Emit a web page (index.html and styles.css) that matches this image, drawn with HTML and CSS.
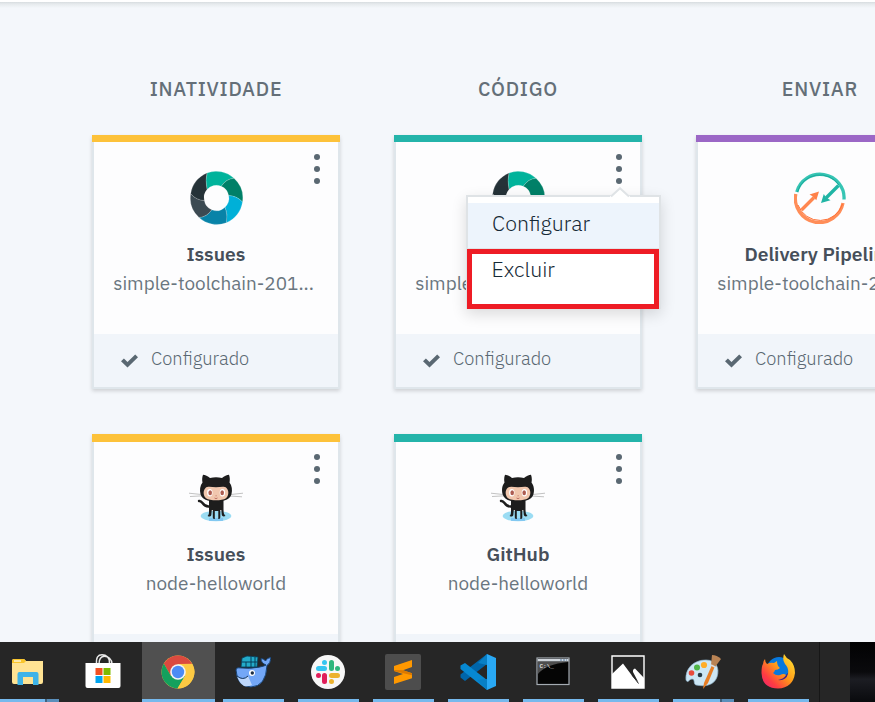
FILE: index.html
```html
<!DOCTYPE html>
<html lang="pt-BR">
<head>
<meta charset="utf-8">
<title>Toolchain</title>
<link rel="stylesheet" href="styles.css">
</head>
<body>
<svg class="defs" width="0" height="0" aria-hidden="true">
  <symbol id="ring" viewBox="0 0 53 54">
    <g stroke="#fff" stroke-opacity=".35" stroke-width=".5">
      <path fill="#00b39b" d="M17 1.9A26.5 26.5 0 0 1 44 7.3Q36 8 31.3 15.3A12.5 12.5 0 0 0 17 18.5Q15 9 17 1.9Z"/>
      <path fill="#008068" d="M44 7.3A26.5 26.5 0 0 1 52.5 31Q47 25 38.7 24.6A12.5 12.5 0 0 0 31.3 15.3Q36 8 44 7.3Z"/>
      <path fill="#00b0d8" d="M52.5 31A26.5 26.5 0 0 1 36.3 51.8Q38 43 35 36.2A12.5 12.5 0 0 0 38.7 24.6Q47 25 52.5 31Z"/>
      <path fill="#0883a8" d="M36.3 51.8A26.5 26.5 0 0 1 9 46.5Q17 46 21.7 38.8A12.5 12.5 0 0 0 35 36.2Q38 43 36.3 51.8Z"/>
      <path fill="#3c4a52" d="M9 46.5A26.5 26.5 0 0 1 .7 22.7Q6 29 14.3 29.5A12.5 12.5 0 0 0 21.7 38.8Q17 46 9 46.5Z"/>
      <path fill="#253238" d="M.7 22.7A26.5 26.5 0 0 1 17 1.9Q15 9 17 18.5A12.5 12.5 0 0 0 14.3 29.5Q6 29 .7 22.7Z"/>
    </g>
  </symbol>
  <symbol id="octocat" viewBox="0 0 54 48">
    <ellipse cx="27" cy="42" rx="15.3" ry="5.2" fill="#9bdcf3"/>
    <path d="M20 44h14v3H20z" fill="#77bff0" opacity=".7"/>
    <path d="M0 19.2l14 1.5M1 22.5l13-.7M40 20.7l14-1.5M40 22l13 .8" stroke="#bbb" stroke-width=".9" fill="none"/>
    <path d="M10 27c4-1 3 6 10 5.500" stroke="#1d1d1d" stroke-width="2.400" fill="none" stroke-linecap="round"/>
    <path d="M20 26h14.500v8c0 5 .3 6 2 8-2 1-3.300.3-3.700-1l-.5-5h-1v7c0 1.600-.6 2-2 2v-8h-3.500v8c-1.400 0-2-.4-2-2v-7h-1l-.5 5c-.4 1.500-1.700 2-3.700 1 1.700-2 1.400-3 1.400-8z" fill="#1d1d1d"/>
    <path d="M14 .8c2 0 5 1.600 7 3.200 4-1 8-1 12 0 2-1.600 5-3.200 7-3.200 1 2.600 1 5.500.5 7.700 2.500 3 3 7.500 2 11.500-1.500 5.500-7 7.500-15.500 7.500S13 25.500 11.500 20c-1-4-.5-8.500 2-11.500C13 6.300 13 3.400 14 .8z" fill="#1d1d1d"/>
    <path d="M16.500 14c2-2 6-.8 10.500-.8s8.500-1.200 10.500.8c3 3.200 2 8-.5 10.200-2 1.600-6 2-10 2s-8-.4-10-2C14.500 22 13.500 17.200 16.500 14z" fill="#f1c7ae"/>
    <ellipse cx="20.800" cy="18.800" rx="2.700" ry="3.700" fill="#fff"/><ellipse cx="33.400" cy="18.800" rx="2.700" ry="3.700" fill="#fff"/>
    <ellipse cx="21.200" cy="18.800" rx="1.800" ry="2.500" fill="#ad5c51"/><ellipse cx="33.200" cy="18.800" rx="1.800" ry="2.500" fill="#ad5c51"/>
    <path d="M25.500 24q1.500 1.300 3 0M26.600 21.800h1" stroke="#ad5c51" stroke-width=".8" fill="none"/>
  </symbol>
  <symbol id="pipeline" viewBox="0 0 52 52">
    <g fill="none" stroke-width="3.300">
      <path d="M2.800 20A24 23.500 0 0 1 50 27.500" stroke="#36c5b4"/>
      <path d="M3.500 20A23 22.500 0 0 1 45 13" stroke="#1aa99a" stroke-width="1"/>
      <path d="M1.800 22A24 24 0 0 0 49 31" stroke="#ff8d58"/>
      <path d="M4 33A23.500 23.500 0 0 0 48.500 32" stroke="#ff6f32" stroke-width="1"/>
      <path d="M7.500 38L20 25.500" stroke="#ff8750"/>
      <path d="M44.500 13.500L32 26" stroke="#20b5a5"/>
    </g>
    <path d="M25 19.500l-9.500 3 3 1.800 3.800 4z" fill="#ff8149"/>
    <path d="M27 31l2.800-9 2 3.300 4.700 3z" fill="#20b5a5"/>
  </symbol>
  <symbol id="kebab" viewBox="0 0 6 30"><g fill="#5a6872"><circle cx="3" cy="3" r="3"/><circle cx="3" cy="15" r="3"/><circle cx="3" cy="27" r="3"/></g></symbol>
  <symbol id="check" viewBox="0 0 17 14"><path d="M0 7.300L2.900 4.400 6.500 7.900 14.200.4 17 3.200 6.500 13.600z" fill="#5a6872"/></symbol>
</svg>

<main class="board">
  <section class="column">
    <h2 class="heading">INATIVIDADE</h2>
    <article class="card yellow">
      <div class="body">
        <svg class="kebab"><use href="#kebab"/></svg>
        <svg class="logo"><use href="#ring"/></svg>
        <h3 class="name">Issues</h3>
        <p class="desc long">simple-toolchain-201...</p>
      </div>
      <footer class="status"><svg class="check"><use href="#check"/></svg><span>Configurado</span></footer>
    </article>
    <article class="card yellow">
      <div class="body">
        <svg class="kebab"><use href="#kebab"/></svg>
        <svg class="logo cat"><use href="#octocat"/></svg>
        <h3 class="name">Issues</h3>
        <p class="desc">node-helloworld</p>
      </div>
      <footer class="status"></footer>
    </article>
  </section>

  <section class="column">
    <h2 class="heading">CÓDIGO</h2>
    <article class="card teal">
      <div class="body">
        <svg class="kebab"><use href="#kebab"/></svg>
        <svg class="logo"><use href="#ring"/></svg>
        <h3 class="name">&nbsp;</h3>
        <p class="desc long">simple-toolchain-201...</p>
      </div>
      <footer class="status"><svg class="check"><use href="#check"/></svg><span>Configurado</span></footer>
      <div class="menu">
        <svg class="caret" viewBox="0 0 20 11"><path d="M0 9.500L10 0 20 9.500V11H0z" fill="#fff"/><path d="M1 9.500L10 1.200 19 9.500" fill="none" stroke="#dfe3e6" stroke-width="2"/></svg>
        <div class="item active">Configurar</div>
        <div class="item marked">Excluir</div>
      </div>
    </article>
    <article class="card teal">
      <div class="body">
        <svg class="kebab"><use href="#kebab"/></svg>
        <svg class="logo cat"><use href="#octocat"/></svg>
        <h3 class="name">GitHub</h3>
        <p class="desc">node-helloworld</p>
      </div>
      <footer class="status"></footer>
    </article>
  </section>

  <section class="column">
    <h2 class="heading">ENVIAR</h2>
    <article class="card purple">
      <div class="body">
        <svg class="logo pipe"><use href="#pipeline"/></svg>
        <h3 class="name">Delivery Pipeline</h3>
        <p class="desc long">simple-toolchain-201...</p>
      </div>
      <footer class="status"><svg class="check"><use href="#check"/></svg><span>Configurado</span></footer>
    </article>
  </section>
</main>

<nav class="taskbar">
  <div class="task split">
    <svg viewBox="0 0 36 36"><path d="M2 7q0-2 2-2h10l2 2h17v21q0 2-2 2H4q-2 0-2-2z" fill="#ffe393"/><path d="M2 9V7q0-2 2-2h10l2 2-2 2z" fill="#f8c52c"/><path d="M4 7h7" stroke="#fff" stroke-width="1.200"/><path d="M7.500 31V20q0-2 2-2h17q2 0 2 2v11h-5.500v-8H13v8z" fill="#3eb3e8"/></svg>
  </div>
  <div class="task idle">
    <svg viewBox="0 0 36 36"><path d="M11.500 10C11 3 13 .8 17 .8s8 2.200 7.500 9.200M14 10c0-5 2-7.800 5.500-7.800S27 5 27 10" fill="none" stroke="#e8e8e8" stroke-width="1.400"/><path d="M.500 9h35v23q0 2-2 2h-31q-2 0-2-2z" fill="#fff"/><path d="M10.500 14h7v7h-7z" fill="#f25022"/><path d="M18.500 14h7v7h-7z" fill="#7fba00"/><path d="M10.500 22h7v7h-7z" fill="#00a4ef"/><path d="M18.500 22h7v7h-7z" fill="#ffb900"/></svg>
  </div>
  <div class="task current">
    <svg viewBox="0 0 36 36"><circle cx="18" cy="18" r="16.500" fill="#fbc544"/><path d="M3.800 9.600A16.500 16.500 0 0 1 32.200 9.700L18 10 11 22z" fill="#db4a3f"/><path d="M3.800 9.600A16.500 16.500 0 0 0 17.500 34.500L25 22 11 22z" fill="#14a05d"/><path d="M18 10h14.300A16.500 16.500 0 0 1 17.500 34.500L25 22z" fill="#fdca43"/><circle cx="18" cy="18" r="7.800" fill="#f3f3f3"/><circle cx="18" cy="18" r="6.200" fill="#4c8bf5"/></svg>
  </div>
  <div class="task">
    <svg viewBox="0 0 36 36"><path d="M1 16q0-2 2-2.200 12 1.200 21-.6 6-1.200 7-2.200-5-2-5-6.500 3 0 4.500 2.500Q32 3.500 36 3.500q-.5 6-4 8-1 21-16 21.500Q2 33 1 16z" fill="#73a7f7" stroke="#174374" stroke-width="1"/><path d="M2 22q6 6 11 0l4 9q-4 2-8 1-5-3-7-10z" fill="#bed7fb"/><path d="M2 22q6 5 11 0" stroke="#16365b" stroke-width="1" fill="none"/><path d="M6 13l1-9 5-2 11 1-1 10z" fill="#23abc9" stroke="#073c59" stroke-width=".8"/><path d="M7 8h15M11 8v5M16 2.500V13M20 3v10" stroke="#073c59" stroke-width="1"/><circle cx="17" cy="19" r="3" fill="#fff"/><circle cx="17.300" cy="19" r="1.700" fill="#1b2c42"/></svg>
  </div>
  <div class="task">
    <svg viewBox="0 0 36 36"><circle cx="18" cy="18" r="17" fill="#f7f7f7"/><g stroke-width="5" stroke-linecap="round"><path d="M14.500 8.500v0M8.500 14.500h6" stroke="#36c5f0"/><path d="M21.500 8.500v6M27.500 14.500v0" stroke="#2eb67d"/><path d="M21.500 21.500h6M21.500 27.500v0" stroke="#ecb22e"/><path d="M14.500 21.500v6M8.500 21.500v0" stroke="#e01e5a"/></g></svg>
  </div>
  <div class="task">
    <svg viewBox="0 0 36 36"><rect width="36" height="36" rx="2" fill="#4d4d4d"/><path d="M9 12L27 6v7l-9 3.200 9 3v5L9 30v-7l9-3-9-3z" fill="#ff9800"/><path d="M18 16.200l9 3v2L9 17v-1z" fill="#dc7900"/></svg>
  </div>
  <div class="task">
    <svg viewBox="0 0 36 36"><path d="M27 0v10L5 27 .5 23.500v-3z" fill="#0065a9"/><path d="M.5 11.500L5 9l22 17v10L.5 15z" fill="#0788d1"/><path d="M27 0l-9 9 9 2zM27 36L17 26l10-1z" fill="#087fc5"/><path d="M27 0l9 4v28l-9 4z" fill="#29a8f4"/></svg>
  </div>
  <div class="task">
    <svg viewBox="0 0 36 36"><rect x="2" y="4" width="32" height="26.500" fill="#050505" stroke="#a4abb2" stroke-width="1.200"/><path d="M2.600 5h31v2.500h-31z" fill="#cfd5db"/><path d="M25 6h7" stroke="#53789f" stroke-width="1" stroke-dasharray="2 1"/><path d="M3 8h30Q11 10 3 20z" fill="#4e4e4e"/><text class="prompt" x="4.500" y="14">C:\_</text></svg>
  </div>
  <div class="task">
    <svg viewBox="0 0 36 36"><path d="M2 2h32v32H2z" fill="#262626" stroke="#fff" stroke-width="1.400"/><path d="M2 20L13 9.500 23 23l5.500 5.500L23 18q-.5-3 2-3.500L34 24V34H2z" fill="#fff"/><path d="M22 21l6.500 8.500" stroke="#262626" stroke-width="1"/></svg>
  </div>
  <div class="task split">
    <svg viewBox="0 0 36 36"><path d="M1 26C0 14 9 6 21 6c10 0 14 8 11 17-3 8-11 10-21 8-3-1-.5-6-4-6-3 0-4 5-6 1z" fill="#cce6f4" stroke="#8fb5cd" stroke-width=".7"/><circle cx="6.500" cy="19" r="2.800" fill="#e84b3c"/><circle cx="12" cy="13.500" r="3" fill="#4fb648"/><circle cx="19" cy="11" r="3.100" fill="#ffad28"/><circle cx="15" cy="21" r="2.300" fill="#263944"/><path d="M18 35l1-6 8-18 3 1-7 17z" fill="#e67d25"/><path d="M26 11l1-10q5 0 9 4l-6 8z" fill="#b98354"/><path d="M26 11l4 2" stroke="#ddd" stroke-width="1.500"/></svg>
  </div>
  <div class="task">
    <svg viewBox="0 0 36 36"><defs><linearGradient id="fox" x1="1" y1="0" x2="0" y2="1"><stop stop-color="#ffed38"/><stop offset=".45" stop-color="#ff9b18"/><stop offset=".75" stop-color="#ff3c42"/><stop offset="1" stop-color="#e91e78"/></linearGradient></defs><circle cx="19" cy="15" r="12" fill="#0878dc"/><path d="M13 20q6 8 15-1l-1 9H14z" fill="#422387"/><path d="M5 5q0 3 2 5 4-2 7-1l3-2q0 5 3 7-2 2-5 2-1 3-2 3 3 3 7 2 4-2 6 0-2 4-8 5 8 1 10-6 1-6-3-10-3-4-1-10 2 4 6 6 5 5 5 13Q33 34 18 34.500 2 34 1.500 19 1.500 12 3 10q0-3 2-5z" fill="url(#fox)"/></svg>
  </div>
  <div class="tray"></div>
</nav>
</body>
</html>
```

FILE: styles.css
```css
* { box-sizing: border-box; margin: 0; padding: 0; }

body {
  width: 875px;
  height: 702px;
  overflow: hidden;
  display: flex;
  flex-direction: column;
  background: #f4f7fb;
  font-family: "IBM Plex Sans", Roboto, "Liberation Sans", sans-serif;
  color: #5a6872;
}

.defs { position: absolute; }
svg { display: block; }

.board {
  flex: none;
  height: 642px;
  overflow: hidden;
  border-top: 2px solid #fff;
  background: linear-gradient(#d7dcdf, #e6eaed 2px, #f4f7fb 6px) no-repeat 0 0 / 100% 6px;
  display: grid;
  grid-template-columns: repeat(3, 248px);
  column-gap: 54px;
  padding: 73px 0 0 92px;
}

.heading {
  height: 60px;
  line-height: 28px;
  text-align: center;
  white-space: nowrap;
  font-size: 19.6px;
  font-weight: 500;
  letter-spacing: .75px;
  color: #646f78;
}

.card {
  position: relative;
  height: 254px;
  margin-bottom: 45px;
  display: flex;
  flex-direction: column;
  border: 2px solid #dfe6eb;
  border-top: 0;
  background: #fdfdfe;
  box-shadow: 0 2px 4px rgba(0, 0, 0, .16);
}

.card::before {
  content: "";
  flex: none;
  height: 7px;
  margin: 0 -2px;
  background: var(--accent);
}

.card + .card::before { height: 8px; }
.yellow { --accent: #fdc23a; }
.teal { --accent: #24b4aa; }
.purple { --accent: #9b67c6; }

.body {
  position: relative;
  height: 192px;
  display: flex;
  flex-direction: column;
  align-items: center;
  padding-top: 29px;
}

.kebab { position: absolute; width: 6px; height: 30px; top: 12px; right: 18px; }
.logo { width: 53px; height: 54px; flex: none; }
.cat { width: 54px; height: 48px; margin: 3px 0; }
.pipe { width: 52px; height: 52px; margin: 1px 0; }

.name {
  margin-top: 14px;
  height: 29px;
  line-height: 29px;
  font-size: 19.3px;
  font-weight: 600;
  white-space: nowrap;
  color: #464f5a;
}

.desc {
  margin-top: 1px;
  height: 29px;
  line-height: 29px;
  font-size: 18.95px;
  font-weight: 400;
  white-space: nowrap;
  color: #6a7680;
}

.long { margin-right: 5px; }

.status {
  flex: 1;
  display: flex;
  align-items: center;
  gap: 13px;
  padding: 0 0 6px 27px;
  background: #f1f5fa;
  font-size: 18.3px;
  font-weight: 300;
}

.check { width: 17px; height: 14px; margin-top: 6px; }

.menu {
  position: absolute;
  z-index: 2;
  left: 70px;
  top: 60px;
  width: 195px;
  height: 114px;
  padding-top: 6px;
  border: 2px solid #dfe3e6;
  border-bottom: 0;
  background: #fff;
  box-shadow: 0 5px 14px rgba(0, 0, 0, .14);
  color: #152935;
}

.caret { position: absolute; width: 20px; height: 11px; left: 142px; top: -10px; }

.item {
  height: 46px;
  line-height: 40px;
  padding-left: 24px;
  font-size: 21.300px;
  font-weight: 300;
}

.active { background: #edf4fc; border-bottom: 1px solid #dfe3e6; }

.marked {
  width: 192px;
  height: 60px;
  margin-left: -1px;
  padding-left: 19.500px;
  line-height: 30px;
  border: 5px solid #ee1c25;
}

.taskbar {
  flex: none;
  height: 60px;
  margin-left: -8px;
  display: flex;
  gap: 2px;
  background: #262626;
}

.task {
  flex: none;
  width: 73px;
  display: flex;
  flex-direction: column;
  align-items: center;
  justify-content: space-between;
  padding-top: 12px;
}

.task svg { width: 36px; height: 36px; margin-right: 2px; }
.task::after { content: ""; width: 61px; height: 3px; background: #76b9ed; }
.idle::after { background: none; }
.current { background: #505050; }
.current::after { width: 73px; }
.split::after { background: linear-gradient(90deg, #76b9ed 47px, #40627e 47px, #40627e 49px, #5a8fbb 49px); }
.prompt { font: 700 6px "Liberation Mono", monospace; fill: #ddd; }

.tray {
  flex: 1;
  margin-left: 2px;
  border-left: 1px solid #171717;
  background: linear-gradient(#020203, #0a0a0d 50%, #1c1d23 62%, #090a0d) no-repeat 30px 0 / 26px 100%;
}
```
